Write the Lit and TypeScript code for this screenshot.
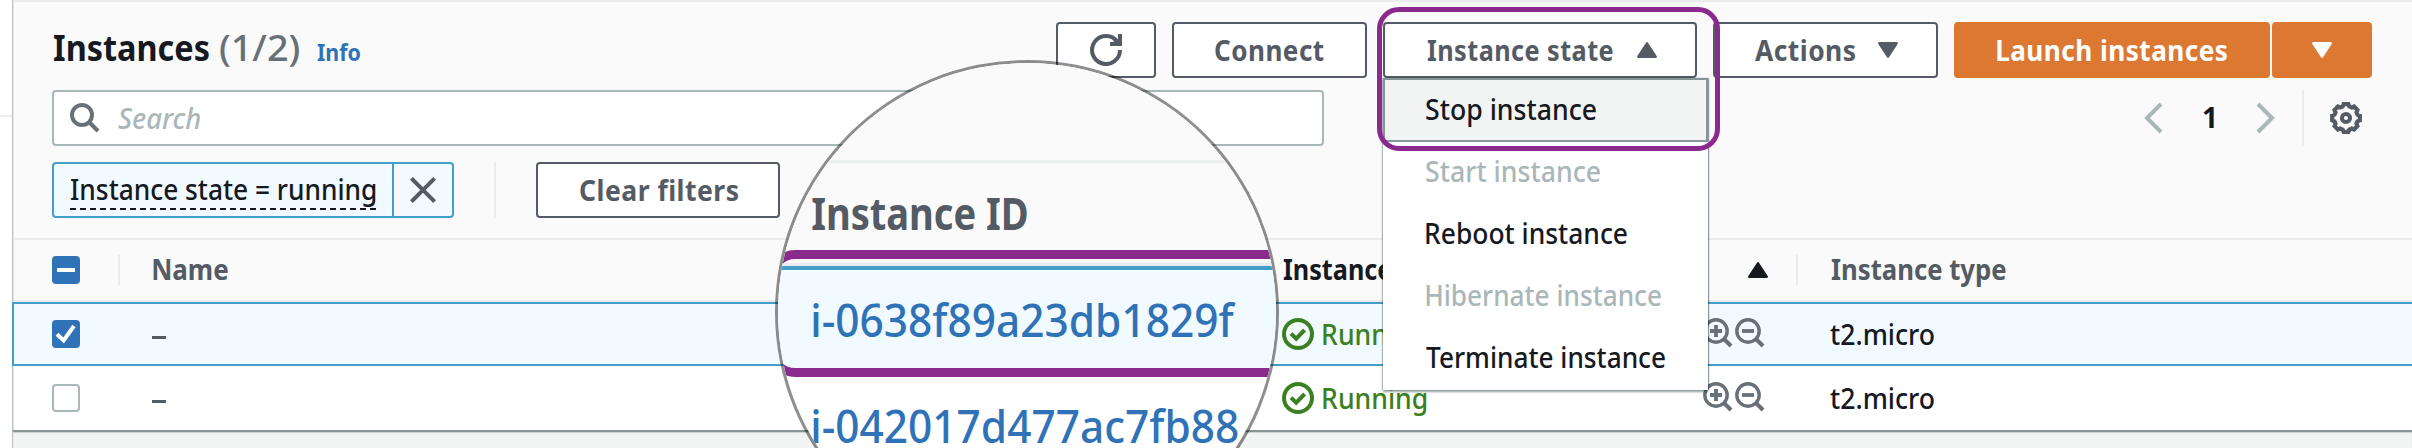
import { LitElement, html, css, svg } from "lit";
import { customElement, property, query } from "lit/decorators.js";

const measure = document.createElement("canvas").getContext("2d")!;

/** One line of text whose glyphs fill exactly `w` pixels. */
@customElement("fit-text")
class FitText extends LitElement {
  @property({ type: Number }) w = 0;
  @property() text = "";
  @query("span") span!: HTMLSpanElement;
  static styles = css`
    :host { display: block; flex: none; white-space: nowrap; }
    span { display: inline-block; transform-origin: 0 50%; }
  `;
  async firstUpdated() {
    this.style.width = this.w + "px";
    this.fit();
    await document.fonts.ready;
    this.fit();
  }
  fit() {
    const s = getComputedStyle(this);
    measure.font = `${s.fontStyle} ${s.fontWeight} ${s.fontSize} ${s.fontFamily}`;
    (measure as any).letterSpacing = s.letterSpacing === "normal" ? "0px" : s.letterSpacing;
    const m = measure.measureText(this.text);
    const k = this.w / (m.actualBoundingBoxLeft + m.actualBoundingBoxRight);
    this.span.style.transform = `translateX(${m.actualBoundingBoxLeft * k}px) scaleX(${k})`;
  }
  render() {
    return html`<span>${this.text}</span>`;
  }
}

const t = (text: string, w: number, cls = "") => html`<fit-text class=${cls} .text=${text} .w=${w}></fit-text>`;

const caret = (up: boolean) => html`<svg class="caret" width="20" height="16" viewBox="0 0 20 16">
  ${up
    ? svg`<path d="M10 1.3 18.7 14.7H1.3Z" fill="currentColor" stroke="currentColor" stroke-width="2.4" stroke-linejoin="round"/>`
    : svg`<path d="M10 14.7 18.7 1.3H1.3Z" fill="currentColor" stroke="currentColor" stroke-width="2.4" stroke-linejoin="round"/>`}
</svg>`;

const search = html`<svg width="30" height="30" viewBox="0 0 30 30" fill="none" stroke="currentColor" stroke-width="4">
  <circle cx="12" cy="12" r="10"/><path d="M19 19 28 28"/></svg>`;

const zoomGlyph = (plus: boolean) => html`<svg width="32" height="32" viewBox="0 0 32 32" fill="none" stroke="currentColor">
  <circle cx="13" cy="13" r="11.2" stroke-width="3.4"/>
  <path d="M21 21 28 28" stroke-width="4"/>
  <path d=${plus ? "M7 13H19M13 7V19" : "M7 13H19"} stroke-width="3.8"/></svg>`;

const okGlyph = html`<svg width="32" height="32" viewBox="0 0 32 32" fill="none" stroke="currentColor" stroke-width="4">
  <circle cx="16" cy="16" r="14"/><path d="M9 15.6 14.2 20.6 22.6 12"/></svg>`;

const refresh = html`<svg class="refresh" width="32" height="32" viewBox="0 0 32 32" fill="none" stroke="currentColor" stroke-width="4">
  <path d="M30 16A14 14 0 1 1 27.5 8"/><path d="M30 0V10H20" /><path d="M24 6 30 10" stroke-width="3"/></svg>`;

function gearPath(): string {
  const pts: string[] = [];
  for (let i = 0; i < 8; i++) {
    const a = (i * Math.PI) / 4;
    for (const [d, r] of [[-0.28, 12], [-0.17, 14], [0.17, 14], [0.28, 12]]) {
      pts.push(`${(16 + r * Math.sin(a + d)).toFixed(2)} ${(16 - r * Math.cos(a + d)).toFixed(2)}`);
    }
  }
  return "M" + pts.join("L") + "Z";
}

const gear = html`<svg width="32" height="32" viewBox="0 0 32 32" fill="none" stroke="currentColor">
  <path d=${gearPath()} stroke-width="4.2"/>
  <circle cx="16" cy="16" r="4.1" stroke-width="4"/></svg>`;

const menuItems = [
  { label: "Stop instance", w: 170, cls: "active" },
  { label: "Start instance", w: 174, cls: "off" },
  { label: "Reboot instance", w: 201, cls: "" },
  { label: "Hibernate instance", w: 235, cls: "off" },
  { label: "Terminate instance", w: 239, cls: "" },
];

@customElement("app-root")
class AppRoot extends LitElement {
  static styles = css`
    :host {
      display: block; position: relative; width: 2412px; height: 448px; overflow: hidden;
      background: #fff; color: #16191f; font: 500 28px/56px "Noto Sans", sans-serif;
      --grey: #545b64; --line: #ebebeb; --blue: #449fc8; --link: #2f72b8;
    }
    * { box-sizing: border-box; }
    svg { display: block; flex: none; }
    .frame { display: grid; grid-template-columns: 12px 1fr; height: 448px; }
    .gutter { display: grid; grid-template-rows: 115px 2px 1fr; }
    .gutter i { grid-row: 2; background: var(--line); }
    .panel { background: #f2f3f3; box-shadow: inset 1px 0 0 #bcc1c3, inset 2px 0 0 #e1e3e4; }
    .head { height: 240px; border-top: 2px solid var(--line); border-bottom: 2px solid var(--line);
      background: #fafafa; margin-left: 1px; padding: 20px 40px 0 39px; }
    .panel > .head { box-shadow: inset 1px 0 0 #e6e8e9; }
    .row { display: flex; align-items: center; }
    .title { height: 56px; }
    h1 { display: flex; margin: 0 auto 0 2px; font-size: 36px; align-items: baseline; font-weight: 700; }
    .count { font-weight: 500; color: #687078; margin-left: 11px; }
    .info { font-size: 24px; color: var(--link); margin-left: 18px; font-weight: 700; }
    .btn { height: 56px; border: 2px solid var(--grey); border-radius: 4px; background: #fff; color: var(--grey);
      display: flex; align-items: center; justify-content: center; font-weight: 700; line-height: 50px; letter-spacing: .5px; flex: none; }
    .btn.refreshb { width: 100px; }
    .btn.connect { width: 195px; margin-left: 16px; }
    .btn.state { width: 314px; margin-left: 16px; gap: 24px; padding-left: 4px; }
    .btn.actions { width: 225px; margin-left: 16px; gap: 23px; padding-left: 1px; }
    .btn.launch { width: 316px; margin-left: 16px; }
    .btn.split { width: 100px; margin-left: 2px; }
    .btn.primary { background: #dd7832; border-color: #dd7832; color: #fff; }
    .btn.clear { width: 244px; margin-left: 40px; padding-left: 2px; }
    .searchrow { margin-top: 12px; height: 56px; color: var(--grey); }
    .searchbox { width: 1272px; height: 56px; border: 2px solid #aab7b8; border-radius: 4px; background: #fff;
      display: flex; align-items: center; padding-left: 16px; gap: 18px; color: #687078; margin-right: auto; line-height: 50px; }
    .ph { font-style: italic; color: #aab7b8; }
    .chev { color: #aab7b8; }
    .page { font-weight: 700; color: #16191f; margin: 0 42px 0 40px; line-height: 50px; height: 52px; }
    .bar { width: 2px; height: 56px; background: var(--line); }
    .searchrow .bar { margin: 0 26px 0 27px; }
    .searchrow { padding-right: 10px; }
    .filters { margin-top: 16px; height: 56px; }
    .filters .bar { margin-left: 40px; }
    .token { display: flex; width: 402px; height: 56px; border: 2px solid var(--blue); border-radius: 4px; background: #f1faff; }
    .token .label { width: 340px; border-right: 2px solid var(--blue); padding: 6px 0 0 16px; }
    .token .label fit-text { height: 40px; line-height: 38px; margin-left: 1px; }
    .dash { height: 2px; width: 306px; margin-top: -2px; background: repeating-linear-gradient(90deg, #16191f 0 6px, transparent 6px 10px); }
    .token .x { flex: 1; display: grid; place-items: center; color: var(--grey); }
    .tr { display: grid; grid-template-columns: 66px 1118px 545px 1fr; align-items: center; padding-left: 40px; height: 64px; background: #fff; }
    .tr.th { height: 62px; border-bottom: 2px solid var(--line); background: #fafafa; font-weight: 700; color: var(--grey); margin-left: 2px; padding-left: 38px; line-height: 56px; }
    .tr.th fit-text { margin-top: -2px; }
    .tr.sel { background: #f1faff; border: 2px solid var(--blue); border-right: 0; padding-left: 38px; }
    .tr:last-of-type { margin-left: 2px; padding-left: 38px; }
    .cb { width: 28px; height: 28px; border-radius: 4px; background: var(--link); display: block; }
    .cb.empty { background: #fff; border: 2px solid #aab7b8; }
    .cell { display: flex; align-items: center; }
    .cell fit-text { margin-top: -1px; }
    .c1 { padding-left: 33px; }
    .th .c1 { border-left: 2px solid var(--line); height: 30px; padding-left: 33px; }
    .c1 i { width: 14px; height: 3px; background: var(--grey); margin: 6px 0 0 1px; }
    .c2 { color: #3b8020; padding-left: 46px; gap: 9px; }
    .c2 .zooms { display: flex; margin-left: auto; color: #687078; margin-right: 14px; }
    .th .c2 { color: #16191f; padding-left: 47px; }
    .th .c2 .caret { margin-left: auto; margin-right: 13px; }
    .c3 { padding-left: 49px; }
    .th .c3 { border-left: 2px solid var(--line); height: 30px; margin-left: 15px; padding-left: 33px; }
    .foot { height: 18px; border-top: 2px solid #879596; box-shadow: inset 0 1px 1px #ccd0d1; background: #f2f3f3; margin-left: 1px; }

    .menu { position: absolute; left: 1383px; top: 78px; width: 325px; height: 312px; background: #fff;
      box-shadow: 0 2px 2px rgba(0,28,36,.4), 1px 0 1px rgba(0,28,36,.35), -1px 0 1px rgba(0,28,36,.2); }
    .mi { height: 62px; padding: 2px 0 0 43px; line-height: 59px; }
    .mi.active { height: 64px; margin-bottom: -2px; background: #f2f3f3; border: 2px solid #879596; padding: 0 0 0 41px; line-height: 59px; }
    .mi.off { color: #aab7b8; }
    .mark { position: absolute; left: 1377px; top: 7px; width: 343px; height: 144px; border: 5px solid #8a2a8c; border-radius: 22px; }

    .lens { position: absolute; left: 775px; top: 60px; width: 504px; height: 504px; border-radius: 50%; overflow: hidden;
      border: 3px solid rgba(0,0,0,.44); background: #fff; background-clip: padding-box; }
    .lens .blank { height: 100px; background: #fafafa; border-bottom: 3px solid #eaeeee; }
    .lens .lh { height: 103px; background: #fafafa; border-bottom: 3px solid var(--line); font-size: 45px; font-weight: 700; color: var(--grey); padding: 20px 0 0 34px; line-height: 60px; }
    .lens .l1 { height: 107px; background: #f1faff; border-top: 4px solid var(--blue); padding: 17px 0 0 35px; }
    .lens .l1, .lens .l2 { font-size: 46px; line-height: 64px; color: var(--link); }
    .lens .l2 { padding: 20px 0 0 35px; }
    .lens .ring { position: absolute; left: -11px; top: 187px; width: 560px; height: 127px; border: 9px solid #8a2a8c; border-radius: 28px; }
  `;

  row(selected: boolean) {
    return html`<div class="tr ${selected ? "sel" : ""}">
      ${selected
        ? html`<span class="cb"><svg width="28" height="28" viewBox="0 0 28 28" fill="none" stroke="#fff" stroke-width="4"><path d="M5 14.2 11.6 20.4 22 6"/></svg></span>`
        : html`<span class="cb empty"></span>`}
      <div class="cell c1"><i></i></div>
      <div class="cell c2">${okGlyph}${t("Running", 104)}<span class="zooms">${zoomGlyph(true)}${zoomGlyph(false)}</span></div>
      <div class="cell c3">${t("t2.micro", 104)}</div>
    </div>`;
  }

  render() {
    return html`
      <div class="frame">
        <div class="gutter"><i></i></div>
        <div class="panel">
          <div class="head">
            <div class="row title">
              <h1>${t("Instances", 155)}${t("(1/2)", 79, "count")}${t("Info", 43, "info")}</h1>
              <div class="btn refreshb">${refresh}</div>
              <div class="btn connect">${t("Connect", 109)}</div>
              <div class="btn state">${t("Instance state", 186)}${caret(true)}</div>
              <div class="btn actions">${t("Actions", 100)}${caret(false)}</div>
              <div class="btn primary launch">${t("Launch instances", 230)}</div>
              <div class="btn primary split">${caret(false)}</div>
            </div>
            <div class="row searchrow">
              <div class="searchbox">${search}${t("Search", 82, "ph")}</div>
              <svg class="chev" width="19" height="32" viewBox="0 0 19 32" fill="none" stroke="currentColor" stroke-width="4"><path d="M17 2 3 16 17 30"/></svg>
              ${t("1", 11, "page")}
              <svg class="chev" width="19" height="32" viewBox="0 0 19 32" fill="none" stroke="currentColor" stroke-width="4"><path d="M2 2 16 16 2 30"/></svg>
              <span class="bar"></span>
              ${gear}
            </div>
            <div class="row filters">
              <div class="token">
                <div class="label">${t("Instance state = running", 305)}<div class="dash"></div></div>
                <div class="x"><svg width="26" height="26" viewBox="0 0 26 26" stroke="currentColor" stroke-width="4"><path d="M1.4 1.4 24.6 24.6M24.6 1.4 1.4 24.6"/></svg></div>
              </div>
              <span class="bar"></span>
              <div class="btn clear">${t("Clear filters", 158)}</div>
            </div>
          </div>
          <div class="tr th">
            <span class="cb"><svg width="28" height="28"><rect x="5" y="12" width="18" height="4" fill="#fff"/></svg></span>
            <div class="cell c1">${t("Name", 75)}</div>
            <div class="cell c2">${t("Instance state", 180)}${caret(true)}</div>
            <div class="cell c3">${t("Instance type", 175)}</div>
          </div>
          ${this.row(true)}${this.row(false)}
          <footer class="foot"></footer>
        </div>
      </div>
      <div class="menu">
        ${menuItems.map((m) => html`<div class="mi ${m.cls}">${t(m.label, m.w)}</div>`)}
      </div>
      <div class="mark"></div>
      <div class="lens">
        <div class="blank"></div>
        <div class="lh">${t("Instance ID", 215)}</div>
        <div class="l1">${t("i-0638f89a23db1829f", 423)}</div>
        <div class="l2">${t("i-042017d477ac7fb88", 425)}</div>
        <div class="ring"></div>
      </div>
    `;
  }
}
